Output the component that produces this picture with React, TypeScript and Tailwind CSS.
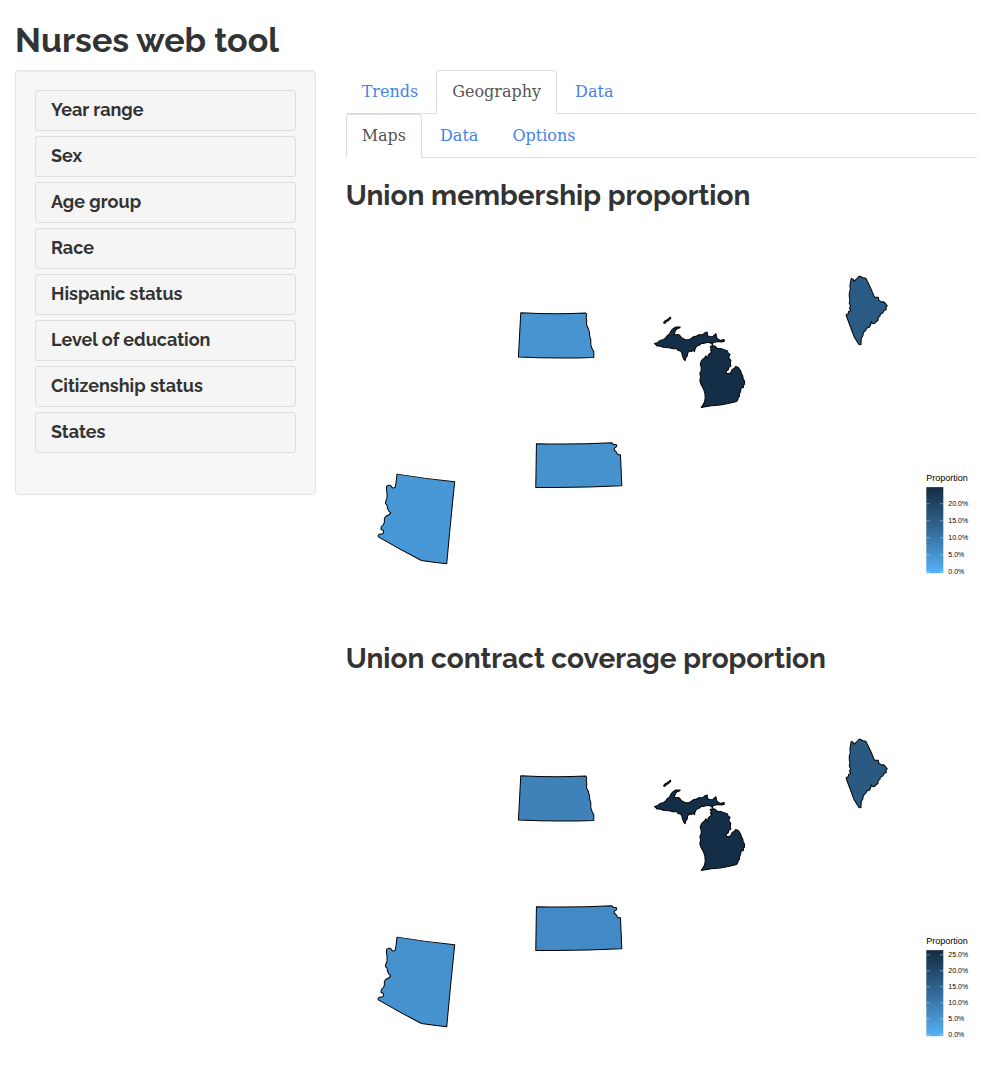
import { useId } from "react";

const filters = [
  "Year range",
  "Sex",
  "Age group",
  "Race",
  "Hispanic status",
  "Level of education",
  "Citizenship status",
  "States",
];

type StateShape = { name: string; transform: string; path: string };

const shapes: Record<string, StateShape> = {
  AZ: {
    name: "Arizona",
    transform: "translate(24 244) scale(0.33333)",
    path: "M81 27 Q168 41 254 50 Q241 173 230 296 Q192 292 154 286 L90 252 L25 215 L24 211 L28 207 L38 206 L41 201 L39 195 L33 193 L34 184 L40 178 L43 172 L43 160 L47 154 L57 149 L62 143 L56 137 L52 128 L51 120 L46 115 L48 106 L51 99 L51 84 L49 72 L50 63 L56 60 L62 61 L66 67 L71 69 L76 65 L78 52 Z",
  },
  ND: {
    name: "North Dakota",
    transform: "translate(164 79) scale(0.33333)",
    path: "M32 38 Q130 43 227 39 L230 44 L228 52 L230 61 L229 74 L234 84 L238 97 L239 110 L242 118 L242 134 L245 144 L251 155 L251 172 Q138 176 25 171 Z",
  },
  KS: {
    name: "Kansas",
    transform: "translate(179 214) scale(0.33333)",
    path: "M34 26 Q147 29 260 23 L265 28 L273 28 L275 34 L268 39 L267 44 L273 50 L276 56 L280 59 L286 59 L290 152 Q161 159 32 157 Z",
  },
  MI: {
    name: "Michigan",
    transform: "translate(299 89) scale(0.33333)",
    path: "M55 38 L61 31 L66 29 L76 21 L77 24 L70 32 L66 33 L59 40 Z M28 100 L38 97 L45 91 L55 88 L61 84 L66 77 L73 72 L76 65 L82 57 L92 51 L105 51 L104 53 L96 56 L91 61 L89 68 L86 75 L97 73 L103 75 L108 82 L114 85 L119 89 L133 88 L139 84 L145 80 L154 78 L161 74 L174 73 L178 69 L186 66 L187 77 L194 79 L203 80 L206 76 L212 71 L215 84 L225 91 L236 88 L238 93 L230 96 L220 94 L212 96 L204 97 L202 104 L196 99 L190 97 L182 98 L176 100 L168 100 L163 105 L154 109 L150 115 L148 125 L144 120 L140 124 L132 123 L127 130 L126 138 L122 143 L120 152 L116 148 L112 139 L110 129 L106 123 L98 121 L96 116 L84 116 L72 113 L57 112 L43 108 L36 108 Z M195 109 L201 107 L209 108 L217 115 L226 115 L235 118 L247 123 L249 129 L255 133 L252 137 L251 144 L257 151 L255 159 L257 168 L251 172 L249 179 L243 183 L244 190 L253 190 L257 187 L261 178 L268 174 L272 169 L279 172 L286 182 L289 191 L293 199 L294 207 L298 213 L298 222 L294 227 L295 232 L288 234 L286 244 L283 252 L283 259 L279 262 L278 269 L274 274 L249 280 L225 285 L198 287 L168 292 L173 285 L178 276 L180 264 L179 249 L175 237 L168 224 L164 213 L166 200 L164 190 L168 181 L168 172 L165 162 L168 154 L173 147 L178 144 L182 137 L187 145 L189 135 L195 129 L200 126 L196 121 L198 116 Z",
  },
  ME: {
    name: "Maine",
    transform: "translate(489 47) scale(0.33333)",
    path: "M48 31 L54 34 L57 40 L61 35 L67 30 L71 25 L76 25 L83 29 L92 31 L98 43 L107 62 L118 88 L129 88 L131 97 L139 102 L145 101 L151 107 L156 113 L152 118 L153 124 L146 128 L143 134 L135 139 L134 145 L129 148 L128 157 L121 163 L117 167 L111 166 L108 161 L106 171 L103 177 L95 180 L91 187 L84 194 L83 203 L78 211 L77 230 L71 229 L64 218 L56 205 L33 143 L33 139 L39 137 L40 130 L46 128 L43 120 L46 113 L42 106 L44 94 L42 88 L42 76 L45 65 L44 53 Z",
  },
};

type Tick = { label: string; y: number };

type MapData = {
  title: string;
  fills: Record<string, string>;
  ticks: Tick[];
};

const maps: MapData[] = [
  {
    title: "Union membership proportion",
    fills: { AZ: "#4897d6", ND: "#4794d1", KS: "#4592cd", MI: "#152e47", ME: "#2a5b84" },
    ticks: [
      { label: "20.0%", y: 282 },
      { label: "15.0%", y: 299 },
      { label: "10.0%", y: 316 },
      { label: "5.0%", y: 333 },
      { label: "0.0%", y: 350 },
    ],
  },
  {
    title: "Union contract coverage proportion",
    fills: { AZ: "#4692cf", ND: "#3f82ba", KS: "#428ac5", MI: "#152e47", ME: "#2a5a81" },
    ticks: [
      { label: "25.0%", y: 270 },
      { label: "20.0%", y: 286 },
      { label: "15.0%", y: 302 },
      { label: "10.0%", y: 318 },
      { label: "5.0%", y: 334 },
      { label: "0.0%", y: 350 },
    ],
  },
];

function StateMap({ data }: { data: MapData }) {
  const gradientId = useId();
  return (
    <svg viewBox="0 0 631 400" className="block w-full" role="img" aria-label={data.title}>
      <defs>
        <linearGradient id={gradientId} x1="0" y1="0" x2="0" y2="1">
          <stop offset="0" stopColor="#132b43" />
          <stop offset="0.5" stopColor="#326a99" />
          <stop offset="1" stopColor="#56b1f7" />
        </linearGradient>
      </defs>
      {Object.entries(shapes).map(([code, shape]) => (
        <path
          key={code}
          d={shape.path}
          transform={shape.transform}
          fill={data.fills[code]}
          stroke="#000"
          strokeWidth="3"
          strokeLinejoin="round"
        />
      ))}
      <text x="580" y="260" className="fill-black font-['Liberation_Sans',sans-serif] text-[9px]">
        Proportion
      </text>
      <rect x="580" y="266" width="17" height="86" fill={`url(#${gradientId})`} />
      {data.ticks.map((tick) => (
        <g key={tick.label}>
          <path
            d={`M580 ${tick.y + 0.5}h3.5M593.5 ${tick.y + 0.5}h3.5`}
            stroke="#fff"
            strokeWidth="1"
            opacity="0.4"
          />
          <text
            x="602"
            y={tick.y + 3}
            className="fill-black font-['Liberation_Sans',sans-serif] text-[7px]"
          >
            {tick.label}
          </text>
        </g>
      ))}
    </svg>
  );
}

function Tabs({ label, items, active }: { label: string; items: string[]; active: string }) {
  return (
    <nav aria-label={label}>
      <ul className="flex gap-0.5 border-b border-[#ddd]">
        {items.map((item) => (
          <li key={item} className="-mb-px">
            <a
              href="#"
              aria-current={item === active ? "page" : undefined}
              className={
                item === active
                  ? "block rounded-t border border-[#ddd] border-b-white bg-white px-[15px] py-2.5 leading-[22px] text-[#555]"
                  : "block rounded-t border border-transparent px-[15px] py-2.5 leading-[22px] text-[#4582ec]"
              }
            >
              {item}
            </a>
          </li>
        ))}
      </ul>
    </nav>
  );
}

export default function App() {
  return (
    <div className="bg-white pt-5 font-['DejaVu_Serif',serif] text-base text-[#333]">
      <h1 className="mb-2.5 px-[15px] font-['Raleway','Lato',sans-serif] text-[34px] leading-10 font-bold">
        Nurses web tool
      </h1>
      <div className="flex items-start">
        <div className="w-1/3 px-[15px]">
          <aside className="rounded border border-[#e3e3e3] bg-[#f7f7f7] px-[19px] pt-[19px] pb-[41px] shadow-[inset_0_1px_1px_rgba(0,0,0,0.05)]">
            <div className="flex flex-col gap-[5px]">
              {filters.map((name) => (
                <button
                  key={name}
                  type="button"
                  className="rounded-[3px] border border-[#ddd] bg-[#f5f5f5] px-[15px] pt-[9px] pb-2.5 text-left font-['Raleway','Lato',sans-serif] text-lg leading-5 font-bold"
                >
                  {name}
                </button>
              ))}
            </div>
          </aside>
        </div>
        <main className="w-2/3 px-[15px]">
          <Tabs label="Sections" items={["Trends", "Geography", "Data"]} active="Geography" />
          <Tabs label="Geography views" items={["Maps", "Data", "Options"]} active="Maps" />
          {maps.map((data) => (
            <section key={data.title} className="pt-5">
              <h2 className="mb-2 font-['Raleway','Lato',sans-serif] text-[28px] leading-[35px] font-bold">
                {data.title}
              </h2>
              <StateMap data={data} />
            </section>
          ))}
        </main>
      </div>
    </div>
  );
}
